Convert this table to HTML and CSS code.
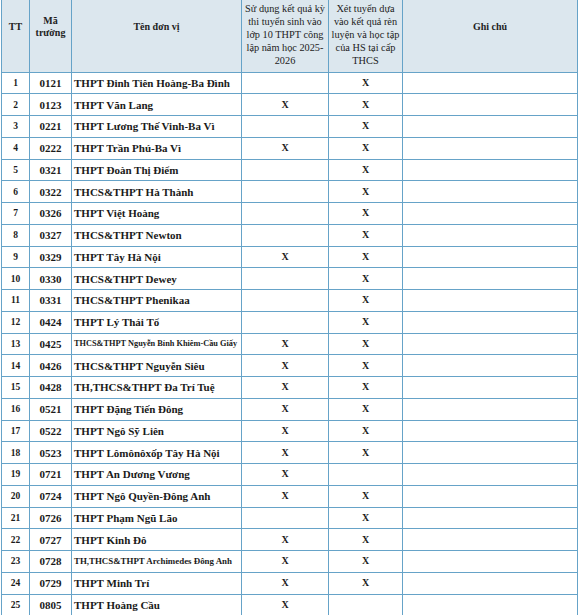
FILE: index.html
```html
<!DOCTYPE html>
<html lang="vi">
<head>
<meta charset="utf-8">
<title>Danh sách đơn vị</title>
<link rel="stylesheet" href="styles.css">
</head>
<body>
<table class="list">
  <colgroup>
    <col class="c-tt"><col class="c-ma"><col class="c-name"><col class="c-a"><col class="c-b"><col class="c-note">
  </colgroup>
  <thead>
    <tr class="head">
      <th class="h-center">TT</th>
      <th class="h-center">Mã<br>trường</th>
      <th class="h-center">Tên đơn vị</th>
      <th class="h-long">Sử dụng kết quả kỳ<br>thi tuyển sinh vào<br>lớp 10 THPT công<br>lập năm học 2025-<br>2026</th>
      <th class="h-long">Xét tuyển dựa<br>vào kết quả rèn<br>luyện và học tập<br>của HS tại cấp<br>THCS</th>
      <th class="h-center">Ghi chú</th>
    </tr>
  </thead>
  <tbody>
    <tr><td class="tt">1</td><td class="ma">0121</td><td class="name">THPT Đinh Tiên Hoàng-Ba Đình</td><td class="x"></td><td class="x">X</td><td></td></tr>
    <tr><td class="tt">2</td><td class="ma">0123</td><td class="name">THPT Văn Lang</td><td class="x">X</td><td class="x">X</td><td></td></tr>
    <tr><td class="tt">3</td><td class="ma">0221</td><td class="name">THPT Lương Thế Vinh-Ba Vì</td><td class="x"></td><td class="x">X</td><td></td></tr>
    <tr><td class="tt">4</td><td class="ma">0222</td><td class="name">THPT Trần Phú-Ba Vì</td><td class="x">X</td><td class="x">X</td><td></td></tr>
    <tr><td class="tt">5</td><td class="ma">0321</td><td class="name">THPT Đoàn Thị Điểm</td><td class="x"></td><td class="x">X</td><td></td></tr>
    <tr><td class="tt">6</td><td class="ma">0322</td><td class="name">THCS&amp;THPT Hà Thành</td><td class="x"></td><td class="x">X</td><td></td></tr>
    <tr><td class="tt">7</td><td class="ma">0326</td><td class="name">THPT Việt Hoàng</td><td class="x"></td><td class="x">X</td><td></td></tr>
    <tr><td class="tt">8</td><td class="ma">0327</td><td class="name">THCS&amp;THPT Newton</td><td class="x"></td><td class="x">X</td><td></td></tr>
    <tr><td class="tt">9</td><td class="ma">0329</td><td class="name">THPT Tây Hà Nội</td><td class="x">X</td><td class="x">X</td><td></td></tr>
    <tr><td class="tt">10</td><td class="ma">0330</td><td class="name">THCS&amp;THPT Dewey</td><td class="x"></td><td class="x">X</td><td></td></tr>
    <tr><td class="tt">11</td><td class="ma">0331</td><td class="name">THCS&amp;THPT Phenikaa</td><td class="x"></td><td class="x">X</td><td></td></tr>
    <tr><td class="tt">12</td><td class="ma">0424</td><td class="name">THPT Lý Thái Tổ</td><td class="x"></td><td class="x">X</td><td></td></tr>
    <tr><td class="tt">13</td><td class="ma">0425</td><td class="name name-xs">THCS&amp;THPT Nguyễn Bỉnh Khiêm-Cầu Giấy</td><td class="x">X</td><td class="x">X</td><td></td></tr>
    <tr><td class="tt">14</td><td class="ma">0426</td><td class="name">THCS&amp;THPT Nguyễn Siêu</td><td class="x">X</td><td class="x">X</td><td></td></tr>
    <tr><td class="tt">15</td><td class="ma">0428</td><td class="name">TH,THCS&amp;THPT Đa Trí Tuệ</td><td class="x">X</td><td class="x">X</td><td></td></tr>
    <tr><td class="tt">16</td><td class="ma">0521</td><td class="name">THPT Đặng Tiến Đông</td><td class="x">X</td><td class="x">X</td><td></td></tr>
    <tr><td class="tt">17</td><td class="ma">0522</td><td class="name">THPT Ngô Sỹ Liên</td><td class="x">X</td><td class="x">X</td><td></td></tr>
    <tr><td class="tt">18</td><td class="ma">0523</td><td class="name">THPT Lômônôxốp Tây Hà Nội</td><td class="x">X</td><td class="x">X</td><td></td></tr>
    <tr><td class="tt">19</td><td class="ma">0721</td><td class="name">THPT An Dương Vương</td><td class="x">X</td><td class="x"></td><td></td></tr>
    <tr><td class="tt">20</td><td class="ma">0724</td><td class="name">THPT Ngô Quyền-Đông Anh</td><td class="x">X</td><td class="x">X</td><td></td></tr>
    <tr><td class="tt">21</td><td class="ma">0726</td><td class="name">THPT Phạm Ngũ Lão</td><td class="x"></td><td class="x">X</td><td></td></tr>
    <tr><td class="tt">22</td><td class="ma">0727</td><td class="name">THPT Kinh Đô</td><td class="x">X</td><td class="x">X</td><td></td></tr>
    <tr><td class="tt">23</td><td class="ma">0728</td><td class="name name-sm">TH,THCS&amp;THPT Archimedes Đông Anh</td><td class="x">X</td><td class="x">X</td><td></td></tr>
    <tr><td class="tt">24</td><td class="ma">0729</td><td class="name">THPT Minh Trí</td><td class="x">X</td><td class="x">X</td><td></td></tr>
    <tr><td class="tt">25</td><td class="ma">0805</td><td class="name">THPT Hoàng Cầu</td><td class="x">X</td><td class="x"></td><td></td></tr>
  </tbody>
</table>
</body>
</html>
```
FILE: styles.css
```css
html, body {
  margin: 0;
  padding: 0;
  background: #ffffff;
}
body {
  font-family: "Liberation Serif", "Times New Roman", serif;
  color: #1a1a1a;
  padding-left: 1px;
}
.list {
  border-collapse: collapse;
  table-layout: fixed;
  width: 577px;
}
.c-tt { width: 28px; }
.c-ma { width: 42px; }
.c-name { width: 170px; }
.c-a { width: 87px; }
.c-b { width: 74px; }
.c-note { width: 175px; }

.list th, .list td {
  border: 1px solid #66a3c8;
  padding: 0;
  overflow: hidden;
  white-space: nowrap;
}
.list th {
  border-top: none;
  background: #dce7ee;
  font-size: 10px;
  line-height: 12px;
  color: #222;
}
.head { height: 72px; }
.list .h-center {
  font-weight: bold;
  text-align: center;
  vertical-align: middle;
  padding-bottom: 18px;
}
.list .h-long {
  font-weight: normal;
  text-align: center;
  vertical-align: top;
  padding-top: 2px;
  line-height: 13px;
  font-size: 10.3px;
}
.list tbody tr { height: 21.75px; }
.list td {
  vertical-align: middle;
  font-weight: bold;
  line-height: 14px;
}
.list .tt {
  text-align: center;
  font-size: 9.5px;
}
.list .ma {
  text-align: center;
  font-size: 11px;
}
.list .name {
  font-size: 11px;
  padding-left: 2px;
}
.list .name-xs { font-size: 8.3px; }
.list .name-sm { font-size: 8.9px; }
.list .x {
  text-align: center;
  font-size: 10px;
}
```
